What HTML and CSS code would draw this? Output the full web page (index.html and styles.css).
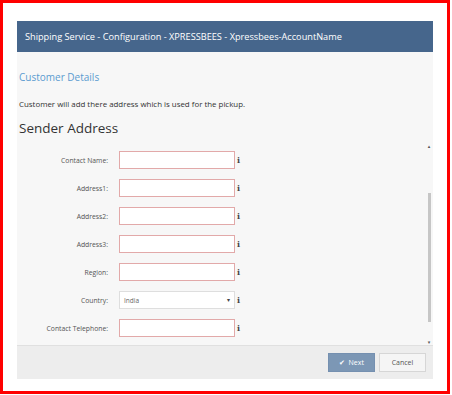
FILE: index.html
```html
<!DOCTYPE html>
<html>
	<head>
		<title>Shipping Service - Configuration</title>
		<link rel="stylesheet" href="styles.css">
	</head>

	<body>
		<div class="frame">
			<div class="dialog">
				<!--Dialog title bar-->
				<div class="header">Shipping Service - Configuration - XPRESSBEES - Xpressbees-AccountName</div>

				<div class="intro">
					<h2 class="section">Customer Details</h2>
					<p class="note">Customer will add there address which is used for the pickup.</p>
					<h1 class="title">Sender Address</h1>
				</div>

				<!--Scrolling form area-->
				<div class="scroll">
					<div class="form">
						<div class="row">
							<label class="label">Contact Name:</label>
							<input type="text" class="field">
							<span class="info">i</span>
						</div>
						<div class="row">
							<label class="label">Address1:</label>
							<input type="text" class="field">
							<span class="info">i</span>
						</div>
						<div class="row">
							<label class="label">Address2:</label>
							<input type="text" class="field">
							<span class="info">i</span>
						</div>
						<div class="row">
							<label class="label">Address3:</label>
							<input type="text" class="field">
							<span class="info">i</span>
						</div>
						<div class="row">
							<label class="label">Region:</label>
							<input type="text" class="field">
							<span class="info">i</span>
						</div>
						<div class="row">
							<label class="label">Country:</label>
							<div class="field select">
								<span>India</span>
								<span class="arrow">&#9662;</span>
							</div>
							<span class="info">i</span>
						</div>
						<div class="row">
							<label class="label">Contact Telephone:</label>
							<input type="text" class="field">
							<span class="info">i</span>
						</div>
					</div>
					<div class="scrollbar">
						<span class="sb-arrow">&#9652;</span>
						<div class="sb-track"><div class="sb-thumb"></div></div>
						<span class="sb-arrow">&#9662;</span>
					</div>
				</div>

				<!--Buttons-->
				<div class="footer">
					<button class="btn next"><span class="tick">&#10004;</span>&nbsp; Next</button>
					<button class="btn cancel">Cancel</button>
				</div>
			</div>
		</div>
	</body>
</html>
```

FILE: styles.css
```css
body {
	margin: 0;
	background: #fff;
	font-family: "Open Sans", "DejaVu Sans", sans-serif;
}

.frame {
	box-sizing: border-box;
	width: 450px;
	height: 394px;
	border: 3px solid #ff0000;
	padding: 18px 0 0 14px;
}

.dialog {
	width: 416px;
	background: #f7f7f7;
}

.header {
	height: 31px;
	line-height: 31px;
	padding-left: 8px;
	background: #46668c;
	color: #fff;
	font-size: 9.2px;
}

.intro {
	padding: 18px 2px 0 2px;
}

.section {
	margin: 0;
	font-size: 10px;
	font-weight: normal;
	color: #5b9bd0;
	line-height: 14px;
}

.note {
	margin: 15px 0 0 0;
	font-size: 7.9px;
	color: #333;
	line-height: 10px;
}

.title {
	margin: 10px 0 0 0;
	font-size: 13.5px;
	font-weight: normal;
	color: #333;
	line-height: 18px;
}

.scroll {
	display: flex;
	height: 202px;
	margin-top: 6px;
}

.form {
	flex: 1;
	display: flex;
	flex-direction: column;
	gap: 10px;
	padding-top: 8px;
}

.row {
	display: flex;
	align-items: center;
	height: 18px;
}

.label {
	width: 91px;
	margin-right: 11px;
	text-align: right;
	font-size: 6.8px;
	color: #555;
}

.field {
	box-sizing: border-box;
	width: 116px;
	height: 18px;
	margin: 0;
	padding: 0 4px;
	background: #fff;
	border: 1px solid #e2a9a9;
	border-radius: 0;
	outline: none;
}

.select {
	display: flex;
	align-items: center;
	justify-content: space-between;
	border-color: #dedede;
	font-size: 6.5px;
	color: #666;
}

.arrow {
	font-size: 6px;
	color: #444;
}

.info {
	margin-left: 2px;
	font-family: "DejaVu Serif", serif;
	font-weight: bold;
	font-size: 8px;
	color: #444;
}

.scrollbar {
	display: flex;
	flex-direction: column;
	align-items: center;
	width: 8px;
}

.sb-arrow {
	font-size: 5px;
	line-height: 6px;
	color: #555;
}

.sb-track {
	flex: 1;
	width: 3px;
	padding-top: 44px;
	padding-bottom: 17px;
}

.sb-thumb {
	height: 100%;
	background: #c6c6c6;
}

.footer {
	display: flex;
	justify-content: flex-end;
	align-items: center;
	gap: 4px;
	height: 33px;
	padding-right: 7px;
	background: #ededed;
	border-top: 1px solid #e0e0e0;
}

.btn {
	height: 19px;
	width: 47px;
	padding: 0;
	font-family: "Open Sans", "DejaVu Sans", sans-serif;
	font-size: 7px;
	border-radius: 0;
}

.next {
	background: #7c97b5;
	color: #fff;
	border: 1px solid #7590b0;
}

.tick {
	font-size: 7px;
}

.cancel {
	background: #f5f5f5;
	color: #555;
	border: 1px solid #d6d6d6;
}
```
